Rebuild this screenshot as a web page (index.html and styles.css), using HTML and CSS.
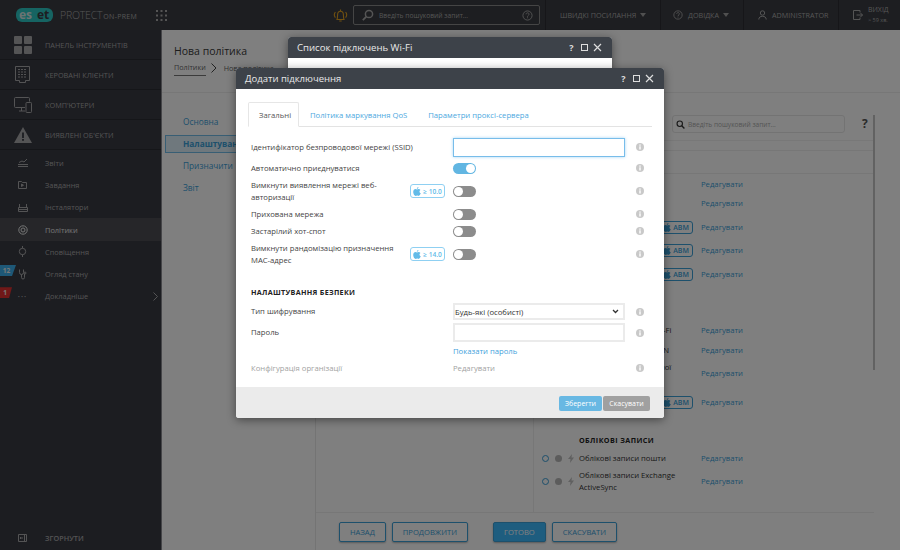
FILE: index.html
```html
<!DOCTYPE html>
<html lang="uk">
<head>
    <meta charset="UTF-8">
    <title>ESET PROTECT</title>
    <link rel="stylesheet" href="styles.css">
</head>
<body>
    <svg class="sprite" xmlns="http://www.w3.org/2000/svg">
        <symbol id="i-apple" viewBox="0 0 12 14"><path d="M8.3 0c.1 1.200-.9 2.800-2.500 2.900C5.600 1.500 6.800.2 8.300 0zM6 3.700c.7 0 1.500-.6 2.700-.6 1 0 2 .5 2.600 1.400-2.200 1.300-1.800 4.300.6 5.300-.6 1.600-2 4.100-3.400 4.100-.9 0-1.200-.6-2.300-.6s-1.500.6-2.300.6C2 13.900.1 10.600.1 7.800.1 5 1.900 3.200 3.600 3.200c1 0 1.800.5 2.400.5z"/></symbol>
        <symbol id="i-info" viewBox="0 0 10 10"><circle cx="5" cy="5" r="4" fill="#c9c9c9"/><rect x="4.300" y="4.300" width="1.400" height="3.200" fill="#fff"/><rect x="4.300" y="2.500" width="1.400" height="1.200" fill="#fff"/></symbol>
        <symbol id="i-search" viewBox="0 0 12 12"><circle cx="5" cy="5" r="3.600" fill="none" stroke="currentColor" stroke-width="1.500"/><path d="M7.700 7.700l3.500 3.500" stroke="currentColor" stroke-width="1.800"/></symbol>
        <symbol id="i-help" viewBox="0 0 12 12"><circle cx="6" cy="6" r="5" fill="none" stroke="currentColor"/><path d="M4.400 4.700c0-2.100 3.300-2.100 3.300-.1 0 1.300-1.700 1.300-1.700 2.700" fill="none" stroke="currentColor"/><rect x="5.500" y="8" width="1" height="1" fill="currentColor"/></symbol>
    </svg>

    <div class="app">
        <header class="topbar">
            <div class="logo"><span class="logo-es">es</span><span class="logo-et">et</span></div>
            <div class="product">PROTECT<small>ON-PREM</small></div>
            <svg class="apps" width="11" height="11" viewBox="0 0 11 11" fill="#aaa"><rect width="2" height="2"/><rect x="4.500" width="2" height="2"/><rect x="9" width="2" height="2"/><rect y="4.500" width="2" height="2"/><rect x="4.500" y="4.500" width="2" height="2"/><rect x="9" y="4.500" width="2" height="2"/><rect y="9" width="2" height="2"/><rect x="4.500" y="9" width="2" height="2"/><rect x="9" y="9" width="2" height="2"/></svg>
            <svg class="bell" width="15" height="15" viewBox="0 0 15 15" fill="none" stroke="#e0a020" stroke-width="1.100"><path d="M4 11.500c.6-1.500.5-3 .6-4.800.1-2 1.300-3.400 2.900-3.400s2.800 1.400 2.900 3.400c.1 1.800 0 3.300.6 4.800z"/><path d="M7.500 1.500v1.800M6.300 13h2.400M2.400 4c-1.300 1.700-1.300 4 0 5.600M12.600 4c1.300 1.700 1.300 4 0 5.600"/></svg>
            <div class="top-search">
                <svg class="top-search-icon" width="12" height="12"><use href="#i-search"/></svg>
                <span>Введіть пошуковий запит...</span>
                <svg class="top-search-help" width="11" height="11"><use href="#i-help"/></svg>
            </div>
            <nav class="top-links">
                <div class="top-link quick">ШВИДКІ ПОСИЛАННЯ<i class="caret"></i></div>
                <div class="top-link help">
                    <svg width="10" height="10"><use href="#i-help"/></svg>ДОВІДКА<i class="caret"></i>
                </div>
                <div class="top-link user">
                    <svg width="9" height="10" viewBox="0 0 9 10" fill="none" stroke="currentColor"><circle cx="4.500" cy="3" r="2.200"/><path d="M.8 9.500c0-2.200 1.500-3.200 3.700-3.200s3.700 1 3.700 3.200"/></svg>ADMINISTRATOR
                </div>
                <div class="top-link logout">
                    <svg width="10" height="10" viewBox="0 0 10 10" fill="none" stroke="currentColor"><path d="M7 2.500V.5H.5v9H7V7.500M3.500 5h6M7.500 3l2 2-2 2"/></svg>
                    <div class="logout-text">ВИХІД<small>&gt; 59 хв.</small></div>
                </div>
            </nav>
        </header>

        <div class="layout">
            <aside class="sidebar">
                <ul class="side-main">
                    <li>
                        <span class="slot"><svg width="18" height="18" viewBox="0 0 18 18" fill="currentColor"><rect width="8" height="8" rx="1"/><rect x="10" width="8" height="8" rx="1"/><rect y="10" width="8" height="8" rx="1"/><rect x="10" y="10" width="8" height="8" rx="1"/></svg></span>ПАНЕЛЬ ІНСТРУМЕНТІВ
                    </li>
                    <li>
                        <span class="slot"><svg width="15" height="17" viewBox="0 0 15 17" fill="none" stroke="currentColor"><path d="M.5.500h14v14h-4v2h-6v-2h-4z"/><path d="M3 3.500h9M3 6h9M3 8.500h9M3 11h9" stroke-dasharray="2 1"/></svg></span>КЕРОВАНІ КЛІЄНТИ
                    </li>
                    <li>
                        <span class="slot"><svg width="18" height="16" viewBox="0 0 18 16" fill="none" stroke="currentColor"><path d="M11 10.500H1.500a1 1 0 0 1-1-1v-8a1 1 0 0 1 1-1h13a1 1 0 0 1 1 1v3M5 14h6M7.500 10.500V14"/><rect x="12" y="5.500" width="5.500" height="10" rx=".8"/></svg></span>КОМП'ЮТЕРИ
                    </li>
                    <li>
                        <span class="slot"><svg width="18" height="16" viewBox="0 0 18 16"><path d="M9 0l9 16H0z" fill="currentColor"/><rect x="8.100" y="5.500" width="1.800" height="5.500" fill="#383a42"/><rect x="8.100" y="12" width="1.800" height="1.800" fill="#383a42"/></svg></span>ВИЯВЛЕНІ ОБ'ЄКТИ
                    </li>
                </ul>
                <ul class="side-sub">
                    <li><span class="slot"><svg width="10" height="9" viewBox="0 0 10 9" fill="none" stroke="currentColor"><path d="M0 8.500h10M0 6.500h10M1 4.500l3-1.500 2 1 3-3"/></svg></span>Звіти</li>
                    <li><span class="slot"><svg width="9" height="9" viewBox="0 0 9 9" fill="none" stroke="currentColor"><path d="M.5 1.500h3l1 1h4v6h-8z"/><path d="M3.500 4l2 1.200-2 1.300z" fill="currentColor"/></svg></span>Завдання</li>
                    <li><span class="slot"><svg width="10" height="9" viewBox="0 0 10 9" fill="none" stroke="currentColor"><path d="M.5 4.500h9v4h-9zM1.500 4.500V1M8.500 4.500V1M.5 6.500h9"/></svg></span>Інсталятори</li>
                    <li class="active"><span class="slot"><svg width="10" height="10" viewBox="0 0 10 10" fill="none" stroke="currentColor"><circle cx="5" cy="5" r="4.200"/><circle cx="5" cy="5" r="2"/></svg></span>Політики</li>
                    <li><span class="slot"><svg width="9" height="11" viewBox="0 0 9 11" fill="none" stroke="currentColor"><circle cx="4.500" cy="5.500" r="3.200"/><path d="M4.500 0v2.300M4.500 8.700V11"/></svg></span>Сповіщення</li>
                    <li><span class="slot"><svg width="8" height="11" viewBox="0 0 8 11" fill="none" stroke="currentColor"><path d="M.5.500v3a2 2 0 0 0 4 0v-3M2.500 5.500v3a1.500 1.500 0 0 0 3 0V5"/><circle cx="6" cy="4" r="1"/></svg></span>Огляд стану<b class="count count-blue">12</b></li>
                    <li><span class="slot dots">···</span>Докладніше<b class="count count-red">1</b><svg class="side-arrow" width="5" height="9" viewBox="0 0 5 9" fill="none" stroke="currentColor"><path d="M.5.500l4 4-4 4"/></svg></li>
                </ul>
                <div class="side-foot"><span class="slot"><svg width="9" height="8" viewBox="0 0 9 8" fill="none" stroke="currentColor"><path d="M.5.500h8v7h-8zM6.500.500v7M2 4h3M3 3l-1 1 1 1"/></svg></span>ЗГОРНУТИ</div>
            </aside>

            <main class="main">
                <div class="page-head">
                    <h1>Нова політика</h1>
                    <div class="crumbs">
                        <a>Політики</a>
                        <svg width="6" height="10" viewBox="0 0 6 10" fill="none" stroke="#444"><path d="M.5.500l4.500 4.500-4.500 4.500"/></svg>
                        <span>Нова політика</span>
                    </div>
                </div>
                <div class="page-body">
                    <ul class="steps">
                        <li>Основна</li>
                        <li class="current">Налаштування</li>
                        <li>Призначити</li>
                        <li>Звіт</li>
                    </ul>
                    <section class="editor">
                        <div class="editor-tools">
                            <div class="editor-search">
                                <svg width="9" height="9"><use href="#i-search"/></svg>
                                <span>Введіть пошуковий запит...</span>
                            </div>
                            <b class="editor-help">?</b>
                        </div>
                        <div class="editor-band"></div>
                        <div class="editor-band tall"></div>
                        <div class="rule-area">
                            <div class="rules">
                                <div class="rule-name wide">Обмеження</div><a class="rule-link">Редагувати</a>
                                <div class="rule-name wide">Домен</div><a class="rule-link">Редагувати</a>
                                <div class="rule-name">Оновлення</div><span class="abm"><svg width="8" height="9"><use href="#i-apple"/></svg>ABM</span><a class="rule-link">Редагувати</a>
                                <div class="rule-name">Програми</div><span class="abm"><svg width="8" height="9"><use href="#i-apple"/></svg>ABM</span><a class="rule-link">Редагувати</a>
                                <div class="rule-name">Екран</div><span class="abm"><svg width="8" height="9"><use href="#i-apple"/></svg>ABM</span><a class="rule-link">Редагувати</a>
                                <div class="rule-spacer"></div>
                                <div class="rule-name wide">Список підключень Wi-Fi</div><a class="rule-link">Редагувати</a>
                                <div class="rule-name wide">Список підключень VPN</div><a class="rule-link">Редагувати</a>
                                <div class="rule-name wide two">Конфігурація глобальної HTTP-проксі</div><a class="rule-link">Редагувати</a>
                                <div class="rule-name"></div><span class="abm"><svg width="8" height="9"><use href="#i-apple"/></svg>ABM</span><a class="rule-link">Редагувати</a>
                                <h3 class="rule-title">ОБЛІКОВІ ЗАПИСИ</h3>
                                <div class="rule-state"><i class="ring"></i><i class="dot"></i><svg width="6" height="9" viewBox="0 0 6 9" fill="#c0c0c0"><path d="M4 0L0 5h2.500L2 9l4-5.500H3.500z"/></svg></div>
                                <div class="rule-name wide">Облікові записи пошти</div><a class="rule-link">Редагувати</a>
                                <div class="rule-state"><i class="ring"></i><i class="dot"></i><svg width="6" height="9" viewBox="0 0 6 9" fill="#c0c0c0"><path d="M4 0L0 5h2.500L2 9l4-5.500H3.500z"/></svg></div>
                                <div class="rule-name wide two">Облікові записи Exchange ActiveSync</div><a class="rule-link">Редагувати</a>
                            </div>
                        </div>
                        <i class="scroll-thumb"></i>
                        <div class="actions">
                            <button class="btn">НАЗАД</button>
                            <button class="btn">ПРОДОВЖИТИ</button>
                            <button class="btn primary">ГОТОВО</button>
                            <button class="btn">СКАСУВАТИ</button>
                        </div>
                    </section>
                </div>
            </main>
        </div>
    </div>

    <div class="shade"></div>

    <div class="dialog dialog-back">
        <div class="dialog-head">
            <span class="dialog-title">Список підключень Wi-Fi</span>
            <span class="dialog-ctl"><b>?</b><i class="ctl-max"></i><svg width="9" height="9" viewBox="0 0 9 9" stroke="#ddd" stroke-width="1.200"><path d="M1 1l7 7M8 1L1 8"/></svg></span>
        </div>
    </div>

    <div class="dialog dialog-front">
        <div class="dialog-head">
            <span class="dialog-title">Додати підключення</span>
            <span class="dialog-ctl"><b>?</b><i class="ctl-max"></i><svg width="9" height="9" viewBox="0 0 9 9" stroke="#ddd" stroke-width="1.200"><path d="M1 1l7 7M8 1L1 8"/></svg></span>
        </div>
        <div class="dialog-body">
            <div class="tabs">
                <div class="tab show">Загальні</div>
                <div class="tab">Політика маркування QoS</div>
                <div class="tab">Параметри проксі-сервера</div>
            </div>
            <div class="form">
                <label class="lbl span">Ідентифікатор безпроводової мережі (SSID)</label>
                <input class="field focus" type="text">
                <svg class="info" width="10" height="10"><use href="#i-info"/></svg>

                <label class="lbl span">Автоматично приєднуватися</label>
                <i class="toggle on"></i>
                <svg class="info" width="10" height="10"><use href="#i-info"/></svg>

                <label class="lbl">Вимкнути виявлення мережі веб-авторизації</label>
                <span class="os"><svg width="8" height="9"><use href="#i-apple"/></svg>≥ 10.0</span>
                <i class="toggle"></i>
                <svg class="info" width="10" height="10"><use href="#i-info"/></svg>

                <label class="lbl span">Прихована мережа</label>
                <i class="toggle"></i>
                <svg class="info" width="10" height="10"><use href="#i-info"/></svg>

                <label class="lbl span">Застарілий хот-спот</label>
                <i class="toggle"></i>
                <svg class="info" width="10" height="10"><use href="#i-info"/></svg>

                <label class="lbl">Вимкнути рандомізацію призначення MAC-адрес</label>
                <span class="os"><svg width="8" height="9"><use href="#i-apple"/></svg>≥ 14.0</span>
                <i class="toggle"></i>
                <svg class="info" width="10" height="10"><use href="#i-info"/></svg>

                <h3 class="form-title">НАЛАШТУВАННЯ БЕЗПЕКИ</h3>

                <label class="lbl span">Тип шифрування</label>
                <select class="field pick"><option>Будь-які (особисті)</option></select>
                <svg class="info" width="10" height="10"><use href="#i-info"/></svg>

                <label class="lbl span">Пароль</label>
                <input class="field" type="password">
                <svg class="info" width="10" height="10"><use href="#i-info"/></svg>

                <a class="show-pass">Показати пароль</a>

                <label class="lbl span muted">Конфігурація організації</label>
                <span class="muted ctl-text">Редагувати</span>
                <svg class="info" width="10" height="10"><use href="#i-info"/></svg>
            </div>
        </div>
        <div class="dialog-foot">
            <button class="dbtn save">Зберегти</button>
            <button class="dbtn cancel">Скасувати</button>
        </div>
    </div>
</body>
</html>
```

FILE: styles.css
```css
/* reset */
body,h1,h3,ul{
    margin:0;
}
ul{
    padding-left:0;
    list-style-type:none;
}
html,body{
    height:100%;
}
body{
    position:relative;
    width:900px;
    height:550px;
    overflow:hidden;
    font-family:"Open Sans","Liberation Sans",sans-serif;
    font-size:7.7px;
    color:#333;
    background:#fff;
}
.sprite{
    display:none;
}
.app{
    display:flex;
    flex-direction:column;
    height:550px;
}

/* top bar */
.topbar{
    display:flex;
    align-items:center;
    flex:none;
    height:30px;
    padding-left:16px;
    background:#3a3c42;
    color:#ababab;
}
.logo{
    display:flex;
    width:37px;
    height:14px;
    border-radius:6px;
    background:#2cc8c4;
    font-size:12px;
    font-weight:700;
    line-height:13px;
}
.logo-es{
    width:20px;
    padding-left:3px;
    box-sizing:border-box;
    color:#d8e8e8;
}
.logo-et{
    flex:1;
    padding-left:1px;
    color:#3a3c42;
}
.product{
    margin-left:7px;
    width:81px;
    font-size:10.5px;
    font-weight:300;
    letter-spacing:-.2px;
    white-space:nowrap;
}
.product small{
    margin-left:1px;
    font-size:7px;
    font-weight:400;
    letter-spacing:.3px;
}
.apps{
    margin-left:15px;
}
.bell{
    margin-left:auto;
    margin-right:5px;
}
.top-search{
    display:flex;
    align-items:center;
    width:187px;
    height:20px;
    box-sizing:border-box;
    margin-right:5px;
    padding:0 6px 0 8px;
    border:1px solid #8b8b8b;
    border-radius:2px;
    font-size:6.7px;
}
.top-search span{
    margin-left:5px;
    flex:1;
}
.top-search-icon{
    transform:scaleX(-1);
}
.top-links{
    display:flex;
    height:30px;
}
.top-link{
    display:flex;
    align-items:center;
    box-sizing:border-box;
    padding-left:14px;
    border-left:1px solid #2c2d32;
    font-size:7.2px;
    white-space:nowrap;
}
.top-link svg{
    margin-right:5px;
}
.quick{
    width:115px;
}
.help{
    width:83px;
    padding-left:12px;
}
.user{
    width:95px;
}
.logout{
    width:62px;
}
.logout-text{
    font-size:7px;
    line-height:11px;
}
.logout-text small{
    display:block;
    font-size:5.5px;
}
.caret{
    margin-left:4px;
    border-left:3.5px solid transparent;
    border-right:3.5px solid transparent;
    border-top:4px solid #a0a0a0;
}

/* layout */
.layout{
    display:flex;
    flex:1;
    min-height:0;
}
.sidebar{
    display:flex;
    flex-direction:column;
    flex:none;
    box-sizing:border-box;
    width:162px;
    background:#383a42;
    border-right:1px solid #8a8a90;
    color:#a8a8aa;
}
.side-main li{
    display:flex;
    align-items:center;
    height:30px;
    box-sizing:border-box;
    border-bottom:1px solid #2b2c32;
    font-size:7.3px;
}
.slot{
    display:flex;
    justify-content:center;
    flex:none;
    width:45px;
}
.side-sub{
    padding-top:1.500px;
}
.side-sub li{
    position:relative;
    display:flex;
    align-items:center;
    height:22.3px;
    font-size:7.4px;
}
.side-sub li.active{
    background:#4c4d53;
    color:#e8e8e8;
}
.dots{
    letter-spacing:1px;
    font-weight:700;
}
.count{
    position:absolute;
    left:0;
    top:2px;
    width:16px;
    height:11px;
    padding-right:3px;
    box-sizing:border-box;
    font-size:6.5px;
    line-height:11px;
    text-align:center;
    color:#f0f0f0;
    clip-path:polygon(0 0,100% 0,75% 100%,0 100%);
}
.count-blue{
    background:#3cb0ee;
}
.count-red{
    width:12px;
    padding-right:2px;
    background:#e03030;
}
.side-arrow{
    margin-left:auto;
    margin-right:3px;
}
.side-foot{
    display:flex;
    align-items:center;
    height:24px;
    margin-top:auto;
    font-size:7.3px;
    font-weight:600;
}

/* page */
.main{
    display:flex;
    flex-direction:column;
    flex:1;
    min-width:0;
    background:#fff;
}
.page-head{
    flex:none;
    box-sizing:border-box;
    height:63px;
    padding:13px 0 0 12px;
    border-bottom:1px solid #eee;
}
.page-head h1{
    font-size:10.5px;
    font-weight:400;
    line-height:17px;
    color:#3a3a3a;
}
.crumbs{
    display:flex;
    align-items:center;
    gap:5px;
    margin-top:2px;
    font-size:7.2px;
    color:#666;
}
.crumbs a{
    padding-bottom:3px;
    border-bottom:1px solid #777;
}
.crumbs svg{
    margin-top:-3px;
}
.crumbs span{
    margin-top:-3px;
    margin-left:2px;
}
.page-body{
    display:flex;
    flex:1;
    min-height:0;
}
.steps{
    flex:none;
    box-sizing:border-box;
    width:153px;
    padding:18px 0 0 3px;
    font-size:8.3px;
    color:#3aa0d8;
}
.steps li{
    height:22px;
    padding-left:18px;
    box-sizing:border-box;
    line-height:22px;
}
.steps .current{
    height:18px;
    margin:2px 0;
    line-height:16px;
    padding-left:17px;
    border:1px solid #70bde8;
    background:#dff0fb;
    font-weight:700;
    white-space:nowrap;
}
.editor{
    position:relative;
    display:flex;
    flex-direction:column;
    flex:1;
    min-width:0;
    margin-right:26px;
    border-left:1px solid #e8e8e8;
}
.editor-tools{
    display:flex;
    align-items:flex-start;
    flex:none;
    box-sizing:border-box;
    height:48px;
    padding:22px 0 0 356px;
    border-bottom:1px solid #f0f0f0;
}
.editor-search{
    display:flex;
    align-items:center;
    gap:3px;
    box-sizing:border-box;
    width:173px;
    height:18px;
    padding-left:3px;
    border:1px solid #e6e6e6;
    border-radius:3px;
    font-size:6.6px;
    color:#aaa;
}
.editor-search svg{
    color:#333;
}
.editor-help{
    margin-left:17px;
    font-size:12px;
    line-height:18px;
    color:#555;
}
.editor-band{
    flex:none;
    height:9px;
    border-bottom:1px solid #eee;
}
.editor-band.tall{
    height:22px;
}
.rule-area{
    flex:1;
    min-height:0;
    margin-left:217px;
    overflow:hidden;
    border-left:1px solid #eee;
}
.rules{
    display:grid;
    grid-template-columns:45px 80px 34px 8px auto;
    grid-template-rows:18px 20px 28px 18px 30px 31px 20px 20px 26px 32px 32px 16px 30px;
    align-items:center;
    margin-top:1px;
}
.rule-state{
    display:flex;
    align-items:center;
    gap:6px;
    grid-column:1;
    padding-left:8px;
}
.rule-name{
    grid-column:2;
    line-height:12px;
}
.rule-name.wide{
    grid-column:2/4;
}
.abm{
    display:flex;
    align-items:center;
    justify-content:center;
    gap:2px;
    grid-column:3;
    box-sizing:border-box;
    height:13px;
    border:1px solid #3aa0d8;
    border-radius:3px;
    font-size:7px;
    font-weight:600;
    color:#3aa0d8;
}
.abm svg,.os svg{
    fill:currentColor;
}
.rule-link{
    grid-column:5;
    color:#3aa0d8;
}
.rule-spacer{
    grid-column:1/-1;
}
.rule-title{
    grid-column:2/-1;
    align-self:end;
    padding-bottom:5px;
    font-size:7.2px;
    font-weight:700;
    letter-spacing:.4px;
    color:#222;
}
.ring{
    box-sizing:border-box;
    width:7px;
    height:7px;
    border:1.300px solid #3aa0d8;
    border-radius:50%;
}
.dot{
    width:7px;
    height:7px;
    border-radius:50%;
    background:#b8b8b8;
}
.scroll-thumb{
    position:absolute;
    right:-1px;
    top:22px;
    width:2px;
    height:255px;
    background:#c4c4c4;
}
.actions{
    display:flex;
    align-items:flex-start;
    flex:none;
    box-sizing:border-box;
    height:38px;
    padding:9px 0 0 23px;
    gap:6px;
    border-top:1px solid #eee;
}
.btn{
    height:20px;
    padding:0 10px;
    border:1px solid #3aa0d8;
    border-radius:2px;
    background:#fff;
    font-family:inherit;
    font-size:7.6px;
    color:#3aa0d8;
    box-shadow:0 1px 2px rgba(0,0,0,.3);
}
.btn.primary{
    margin-left:19px;
    background:#3dbbff;
    color:#fff;
}

/* dim layer and dialogs */
.shade{
    position:absolute;
    left:0;
    top:0;
    width:900px;
    height:550px;
    background:rgba(0,0,0,.5);
}
.dialog{
    position:absolute;
    display:flex;
    flex-direction:column;
    border-radius:3px;
    overflow:hidden;
    background:#fff;
    box-shadow:0 2px 10px rgba(0,0,0,.45);
}
.dialog-back{
    left:288px;
    top:37px;
    width:324px;
    height:360px;
}
.dialog-front{
    left:236px;
    top:68px;
    width:428px;
    height:350px;
}
.dialog-head{
    display:flex;
    align-items:center;
    flex:none;
    height:21px;
    padding:0 10.500px 0 9px;
    background:#3d4249;
    color:#e8e8e8;
}
.dialog-title{
    flex:1;
    font-size:9.5px;
}
.dialog-back .dialog-title{
    font-size:9.6px;
}
.dialog-ctl{
    display:flex;
    align-items:center;
    gap:5px;
}
.dialog-ctl b{
    margin-right:2px;
    font-size:9px;
    color:#ddd;
}
.ctl-max{
    box-sizing:border-box;
    width:7px;
    height:7px;
    border:1px solid #ddd;
}
.dialog-body{
    flex:1;
    padding:13px 12px 0;
}
.tabs{
    display:flex;
    height:25px;
    box-sizing:border-box;
    border-bottom:1px solid #e3e3e3;
    color:#4ca8e0;
}
.tab{
    box-sizing:border-box;
    height:25px;
    padding:0 10px;
    margin-right:1px;
    line-height:26px;
    white-space:nowrap;
}
.tab.show{
    width:51px;
    margin-right:1px;
    border:1px solid #e6e6e6;
    border-bottom-color:#fff;
    border-radius:2px 2px 0 0;
    line-height:24px;
    color:#555;
}
.form{
    display:grid;
    grid-template-columns:159px 43px 172px 1fr;
    grid-template-rows:20px 22px 24px 22px 12px 34px 30px 21px 21px 15px 20px;
    align-items:center;
    margin:10px 0 0 3px;
}
.lbl{
    grid-column:1;
    line-height:12.500px;
    color:#444;
}
.lbl.span{
    grid-column:1/3;
}
.os{
    display:flex;
    align-items:center;
    justify-content:center;
    gap:2px;
    grid-column:2;
    box-sizing:border-box;
    width:35px;
    height:14px;
    border:1px solid #8fd0f2;
    border-radius:3px;
    font-size:6.6px;
    font-weight:600;
    color:#62bbe8;
}
.field{
    grid-column:3;
    box-sizing:border-box;
    width:172px;
    height:19px;
    margin:0;
    padding:0;
    border:2px solid #ebebeb;
    outline:none;
    font-family:inherit;
    font-size:7.7px;
    color:#333;
    background:#fff;
}
.field.focus{
    border:1px solid #78bdea;
    box-shadow:0 0 3px #a5d5f3;
}
.field.pick{
    appearance:none;
    height:17px;
    background:#fff url("data:image/svg+xml,%3Csvg xmlns='http://www.w3.org/2000/svg' width='7' height='5'%3E%3Cpath d='M1 1l2.500 2.500L6 1' fill='none' stroke='%23333' stroke-width='1.300'/%3E%3C/svg%3E") no-repeat right 4px center;
}
.toggle{
    position:relative;
    grid-column:3;
    display:block;
    width:23px;
    height:11px;
    border-radius:6px;
    background:#8c8c8c;
}
.toggle:before{
    content:"";
    position:absolute;
    left:1px;
    top:1px;
    width:9px;
    height:9px;
    border-radius:50%;
    background:#fff;
}
.toggle.on{
    background:#62b6e2;
}
.toggle.on:before{
    left:13px;
}
.info{
    grid-column:4;
    margin-left:10px;
}
.form-title{
    grid-column:1/-1;
    align-self:end;
    padding-bottom:4px;
    font-size:7.2px;
    font-weight:700;
    letter-spacing:.3px;
    color:#222;
}
.show-pass{
    grid-column:3;
    color:#3f9fdc;
}
.muted{
    color:#a2a2a2;
}
.ctl-text{
    grid-column:3;
}
.dialog-foot{
    display:flex;
    justify-content:flex-end;
    gap:1px;
    flex:none;
    box-sizing:border-box;
    height:31px;
    padding:9px 14px 0 0;
    background:#ebebeb;
}
.dbtn{
    height:15px;
    padding:0;
    border:none;
    border-radius:2px;
    font-family:inherit;
    font-size:7px;
    color:#fff;
}
.save{
    width:43px;
    background:#68b8e3;
}
.cancel{
    width:47px;
    background:#a0a0a0;
}
```
